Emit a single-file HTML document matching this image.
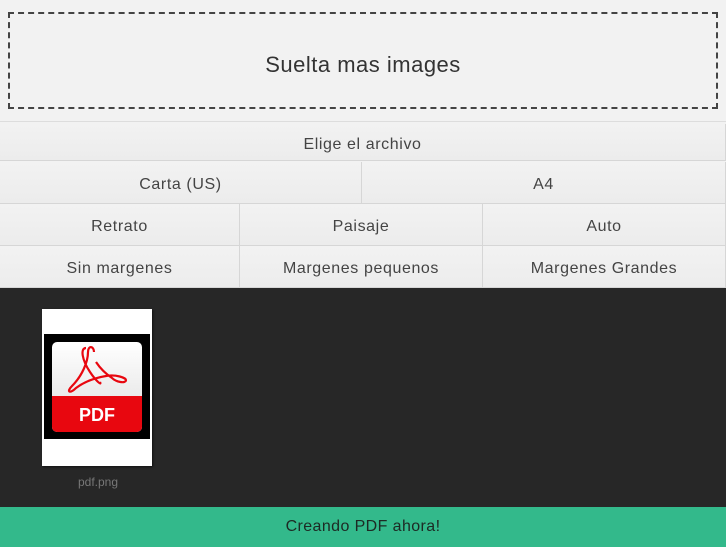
<!DOCTYPE html>
<html><head><style>
*{margin:0;padding:0;box-sizing:border-box}
body{width:726px;height:547px;background:#f2f2f2;font-family:"Liberation Sans",sans-serif;position:relative;overflow:hidden;color:#444}
.dz{position:absolute;left:8px;top:12px;width:710px;height:97px;border:2px dashed #444;display:flex;align-items:center;justify-content:center;font-size:22px;color:#333;letter-spacing:.5px;padding-top:8px}
.row{position:absolute;left:0;width:726px;display:flex}
.b{flex:none;display:flex;align-items:center;justify-content:center;font-size:16px;color:#444;letter-spacing:.6px;background:linear-gradient(#f2f2f2,#ececec);border-right:1px solid #d6d6d6;border-bottom:1px solid #d6d6d6;height:100%;padding-top:5px}
.dark{position:absolute;left:0;top:288px;width:726px;height:219px;background:#272727}
.card{position:absolute;left:42px;top:309px;width:110px;height:157px;background:#fff;box-shadow:1px 1px 2px #111}
.img{position:absolute;left:2px;top:25px;width:106px;height:105px;background:#000}
.lbl{position:absolute;left:42px;top:475px;width:112px;text-align:center;font-size:12px;color:#777}
.go{position:absolute;left:0;top:507px;width:726px;height:40px;background:#33b98b;display:flex;align-items:center;justify-content:center;font-size:16px;color:#1d2a24;letter-spacing:.4px}
</style></head><body>
<div class="dz">Suelta mas images</div>
<div class="row" style="top:121px;height:2px;border-top:1px solid #ddd"></div>
<div class="row" style="top:124px;height:37px"><div class="b" style="width:726px">Elige el archivo</div></div>
<div class="row" style="top:162px;height:42px"><div class="b" style="width:362px">Carta (US)</div><div class="b" style="width:364px">A4</div></div>
<div class="row" style="top:204px;height:42px"><div class="b" style="width:240px">Retrato</div><div class="b" style="width:243px">Paisaje</div><div class="b" style="width:243px">Auto</div></div>
<div class="row" style="top:246px;height:42px"><div class="b" style="width:240px">Sin margenes</div><div class="b" style="width:243px">Margenes pequenos</div><div class="b" style="width:243px">Margenes Grandes</div></div>
<div class="dark"></div>
<div class="card"><div class="img">
<svg width="106" height="105" viewBox="0 0 106 105">
<defs><linearGradient id="g" x1="0" y1="0" x2="0" y2="1"><stop offset="0" stop-color="#fff"/><stop offset="1" stop-color="#ddd"/></linearGradient></defs>
<rect x="8" y="8" width="90" height="90" rx="5" fill="url(#g)"/>
<path d="M8 62 H98 V93 a5 5 0 0 1 -5 5 H13 a5 5 0 0 1 -5 -5Z" fill="#e8070f"/>
<path d="M42 14 c-6 0 -4 12 4 24 c6 9 12 14 10 10 M50 18 c0 -6 -6 -7 -6 0 c0 10 -6 24 -16 34 c-6 6 -2 8 4 2 c8 -6 18 -10 30 -12 c10 -2 20 2 20 4 c0 4 -10 2 -14 -2 c-6 -4 -12 -10 -16 -16" fill="none" stroke="#e8070f" stroke-width="2.2"/>
<text x="53" y="87" text-anchor="middle" font-family="Liberation Sans" font-weight="bold" font-size="18" fill="#fff">PDF</text>
</svg></div></div>
<div class="lbl">pdf.png</div>
<div class="go">Creando PDF ahora!</div>
</body></html>
